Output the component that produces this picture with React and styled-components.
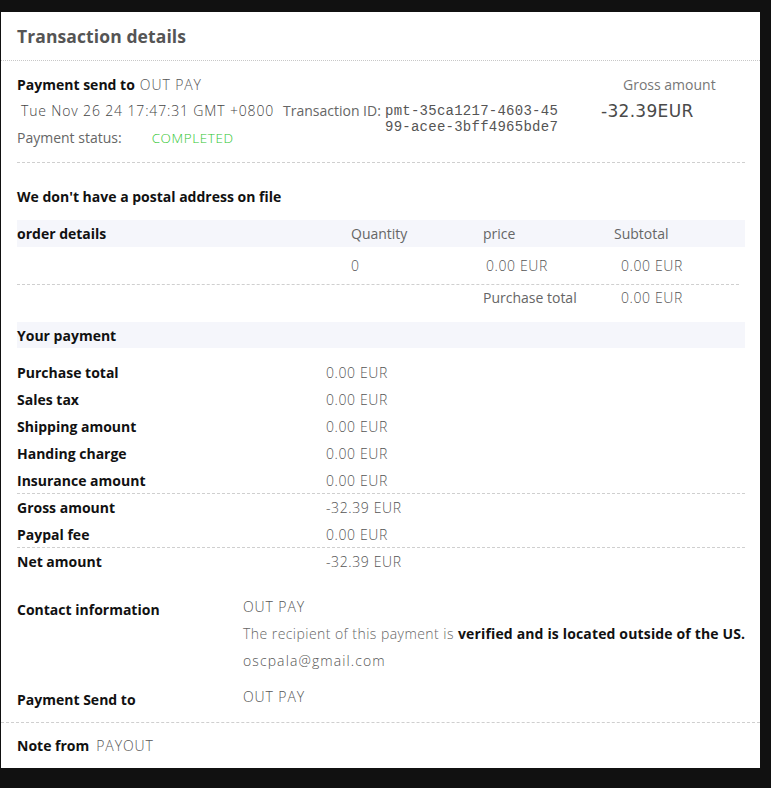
import React from "react";
import styled, { createGlobalStyle } from "styled-components";

const Global = createGlobalStyle`
  html, body {
    margin: 0;
    padding: 0;
    background: #111111;
  }
  body {
    font-family: "Open Sans", "Liberation Sans", sans-serif;
    width: 771px;
    height: 788px;
    overflow: hidden;
  }
`;

const Card = styled.div`
  margin: 12px 0 0 1px;
  width: 759px;
  height: 756px;
  background: #ffffff;
  box-sizing: border-box;
`;

const Header = styled.div`
  height: 48px;
  display: flex;
  align-items: center;
  padding: 0 16px;
  border-bottom: 1px dotted #c8c8c8;
`;

const Title = styled.h1`
  margin: 0;
  font-size: 17.5px;
  font-weight: 700;
  color: #555555;
  letter-spacing: 0.1px;
`;

const Section = styled.div`
  padding: ${(p) => p.$pad || "0"};
  margin: 0 15px 0 16px;
  border-bottom: ${(p) => (p.$divider ? "1px dashed #cfcfcf" : "none")};
`;

const Summary = styled.div`
  display: grid;
  grid-template-columns: 584px 1fr;
  padding: 12px 0 13px;
`;

const Bold = styled.span`
  font-weight: 700;
  font-size: 14px;
  color: #111111;
`;

const Light = styled.span`
  font-weight: 300;
  font-size: ${(p) => p.$size || "14px"};
  color: ${(p) => p.$color || "#555555"};
  letter-spacing: ${(p) => p.$spacing || "0.6px"};
`;

const Line = styled.div`
  display: flex;
  align-items: baseline;
  gap: ${(p) => p.$gap || "5px"};
  line-height: ${(p) => p.$lh || "24px"};
`;

const MetaGrid = styled.div`
  display: grid;
  grid-template-columns: 266px 102px 1fr;
  grid-template-rows: 16px 8px 22px;
  margin-top: 6px;
`;

const DateText = styled.span`
  grid-column: 1;
  grid-row: 1;
  padding-left: 4px;
  font-size: 14px;
  font-weight: 300;
  color: #444444;
  letter-spacing: 0.85px;
  line-height: 16px;
  white-space: nowrap;
`;

const IdLabel = styled.span`
  grid-column: 2;
  grid-row: 1;
  font-size: 14px;
  color: #666666;
  line-height: 16px;
  white-space: nowrap;
`;

const IdValue = styled.span`
  grid-column: 3;
  grid-row: 1 / 4;
  font-family: "Liberation Mono", "DejaVu Sans Mono", monospace;
  font-size: 14px;
  color: #555555;
  letter-spacing: 0.25px;
  line-height: 16px;
  width: 178px;
  word-break: break-all;
`;

const Status = styled.div`
  grid-column: 1 / 3;
  grid-row: 3;
  display: flex;
  align-items: center;
  line-height: 22px;
  font-size: 14px;
  color: #666666;
`;

const Completed = styled.span`
  margin-left: 30px;
  color: #2fc62f;
  font-size: 13.5px;
  font-weight: 300;
  letter-spacing: 0.6px;
`;

const Gross = styled.div`
  display: flex;
  flex-direction: column;
`;

const GrossLabel = styled.span`
  padding-left: 22px;
  font-size: 14px;
  color: #777777;
  line-height: 24px;
`;

const GrossValue = styled.span`
  margin-top: 2px;
  font-family: "DejaVu Sans", "Liberation Sans", sans-serif;
  font-size: 17px;
  letter-spacing: 0.3px;
  color: #4a4a4a;
  line-height: 24px;
`;

const Band = styled.div`
  display: grid;
  grid-template-columns: ${(p) => p.$cols || "1fr"};
  align-items: center;
  height: ${(p) => p.$h || "27px"};
  background: #f5f6fb;
  margin-top: ${(p) => p.$mt || "0"};
`;

const TableRow = styled.div`
  display: grid;
  grid-template-columns: 334px 132px 131px 1fr;
  align-items: center;
  height: ${(p) => p.$h};
  margin-right: ${(p) => p.$mr || "0"};
  border-bottom: ${(p) => (p.$dashed ? "1px dashed #cfcfcf" : "none")};
  box-sizing: border-box;
`;

const Head = styled.span`
  font-size: 14px;
  color: #666666;
`;

const Cell = styled(Light)`
  padding-left: ${(p) => p.$indent || "0"};
`;

const PayRow = styled.div`
  display: grid;
  grid-template-columns: 309px 1fr;
  align-items: center;
  height: 27px;
  box-sizing: border-box;
  border-bottom: ${(p) => (p.$dashed ? "1px dashed #cfcfcf" : "none")};
`;

const InfoRow = styled.div`
  display: grid;
  grid-template-columns: 226px 1fr;
  margin-top: ${(p) => p.$mt || "0"};
`;

const InfoLabel = styled(Bold)`
  line-height: 27px;
  padding-top: 3px;
`;

const InfoLines = styled.div`
  display: flex;
  flex-direction: column;
`;

const InfoLine = styled.div`
  line-height: 27px;
  white-space: nowrap;
`;

const Recipient = styled.span`
  font-size: 14px;
  font-weight: 300;
  color: #666666;
  letter-spacing: 0.45px;
  b {
    font-weight: 700;
    color: #111111;
    letter-spacing: 0.15px;
  }
`;

const NoteRow = styled.div`
  display: flex;
  align-items: baseline;
  gap: 7px;
  padding: 11px 16px 0;
  line-height: 24px;
`;

const Divider = styled.div`
  border-top: 1px dashed #cfcfcf;
`;

const Spacer = styled.div`
  height: ${(p) => p.$h};
`;

const payments = [
  ["Purchase total", "0.00 EUR"],
  ["Sales tax", "0.00 EUR"],
  ["Shipping amount", "0.00 EUR"],
  ["Handing charge", "0.00 EUR"],
  ["Insurance amount", "0.00 EUR", true],
  ["Gross amount", "-32.39 EUR"],
  ["Paypal fee", "0.00 EUR", true],
  ["Net amount", "-32.39 EUR"],
];

export default function App() {
  return (
    <>
      <Global />
      <Card>
        <Header>
          <Title>Transaction details</Title>
        </Header>

        <Section $divider>
          <Summary>
            <div>
              <Line>
                <Bold>Payment send to</Bold>
                <Light $spacing="0.9px">OUT PAY</Light>
              </Line>
              <MetaGrid>
                <DateText>Tue Nov 26 24 17:47:31 GMT +0800</DateText>
                <IdLabel>Transaction ID:</IdLabel>
                <IdValue>pmt-35ca1217-4603-4599-acee-3bff4965bde7</IdValue>
                <Status>
                  Payment status:
                  <Completed>COMPLETED</Completed>
                </Status>
              </MetaGrid>
            </div>
            <Gross>
              <GrossLabel>Gross amount</GrossLabel>
              <GrossValue>-32.39EUR</GrossValue>
            </Gross>
          </Summary>
        </Section>

        <Section $pad="24px 0 0">
          <Line $lh="20px">
            <Bold>We don't have a postal address on file</Bold>
          </Line>
          <Band $mt="13px" $cols="334px 132px 131px 1fr">
            <Bold>order details</Bold>
            <Head>Quantity</Head>
            <Head>price</Head>
            <Head>Subtotal</Head>
          </Band>
          <TableRow $h="38px" $mr="6px" $dashed>
            <span />
            <Cell>0</Cell>
            <Cell $indent="3px">0.00 EUR</Cell>
            <Cell $indent="7px">0.00 EUR</Cell>
          </TableRow>
          <TableRow $h="25px">
            <span />
            <span />
            <Head>Purchase total</Head>
            <Cell $indent="7px">0.00 EUR</Cell>
          </TableRow>
          <Band $mt="12px" $h="26px">
            <Bold>Your payment</Bold>
          </Band>
          <Spacer $h="11px" />
          {payments.map(([label, value, dashed]) => (
            <PayRow key={label} $dashed={dashed}>
              <Bold>{label}</Bold>
              <Light>{value}</Light>
            </PayRow>
          ))}
          <InfoRow $mt="18px">
            <InfoLabel>Contact information</InfoLabel>
            <InfoLines>
              <InfoLine>
                <Light $spacing="0.9px">OUT PAY</Light>
              </InfoLine>
              <InfoLine>
                <Recipient>
                  The recipient of this payment is{" "}
                  <b>verified and is located outside of the US.</b>
                </Recipient>
              </InfoLine>
              <InfoLine>
                <Light $spacing="1.1px">oscpala@gmail.com</Light>
              </InfoLine>
            </InfoLines>
          </InfoRow>
          <InfoRow $mt="9px">
            <InfoLabel>Payment Send to</InfoLabel>
            <InfoLines>
              <InfoLine>
                <Light $spacing="0.9px">OUT PAY</Light>
              </InfoLine>
            </InfoLines>
          </InfoRow>
          <Spacer $h="9px" />
        </Section>
        <Divider />
        <NoteRow>
          <Bold>Note from</Bold>
          <Light $spacing="0.9px">PAYOUT</Light>
        </NoteRow>
      </Card>
    </>
  );
}
